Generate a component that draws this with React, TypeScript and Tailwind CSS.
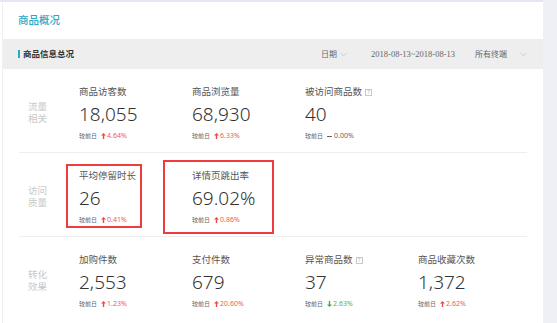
import React from "react";

type Trend = "up" | "down" | "flat";
type Metric = { label: string; value: string; trend: Trend; pct: string; q?: boolean };

const rows: { tag: [string, string]; items: Metric[] }[] = [
  {
    tag: ["流量", "相关"],
    items: [
      { label: "商品访客数", value: "18,055", trend: "up", pct: "4.64%" },
      { label: "商品浏览量", value: "68,930", trend: "up", pct: "6.33%" },
      { label: "被访问商品数", value: "40", trend: "flat", pct: "0.00%", q: true },
    ],
  },
  {
    tag: ["访问", "质量"],
    items: [
      { label: "平均停留时长", value: "26", trend: "up", pct: "0.41%" },
      { label: "详情页跳出率", value: "69.02%", trend: "up", pct: "0.86%" },
    ],
  },
  {
    tag: ["转化", "效果"],
    items: [
      { label: "加购件数", value: "2,553", trend: "up", pct: "1.23%" },
      { label: "支付件数", value: "679", trend: "up", pct: "20.60%" },
      { label: "异常商品数", value: "37", trend: "down", pct: "2.63%", q: true },
      { label: "商品收藏次数", value: "1,372", trend: "up", pct: "2.62%" },
    ],
  },
];

function Chevron() {
  return (
    <svg width="7" height="5" viewBox="0 0 7 5" className="ml-[3px]">
      <path d="M0.5 1 L3.5 4 L6.5 1" fill="none" stroke="#c4c4c4" strokeWidth="0.8" />
    </svg>
  );
}

function QIcon() {
  return (
    <span className="ml-[3px] inline-flex h-[7px] w-[7px] items-center justify-center border border-[#c8c8c8] text-[5px] leading-none text-[#aaa]">
      ?
    </span>
  );
}

function Arrow({ trend }: { trend: Trend }) {
  if (trend === "flat")
    return <span className="mr-[2px] inline-block h-[1px] w-[5px] bg-[#666]" />;
  const color = trend === "up" ? "#f04848" : "#3bb33b";
  return (
    <svg width="5" height="6" viewBox="0 0 5 6" className="mr-[1px]">
      {trend === "up" ? (
        <path d="M2.5 0 L5 2.6 L3.2 2.6 L3.2 6 L1.8 6 L1.8 2.6 L0 2.6 Z" fill={color} />
      ) : (
        <path d="M2.5 6 L5 3.4 L3.2 3.4 L3.2 0 L1.8 0 L1.8 3.4 L0 3.4 Z" fill={color} />
      )}
    </svg>
  );
}

function Cell({ m }: { m: Metric }) {
  const pctColor = m.trend === "up" ? "text-[#f05a5a]" : m.trend === "down" ? "text-[#52b84a]" : "text-[#666]";
  return (
    <div className="flex w-[113px] flex-col">
      <div className="flex h-[12px] items-center text-[9.5px] leading-[12px] text-[#555]">
        {m.label}
        {m.q && <QIcon />}
      </div>
      <div className="mt-[4px] h-[24px] text-[19px] font-light leading-[24px] text-[#333]">{m.value}</div>
      <div className="mt-[5px] flex h-[10px] items-center text-[6px] leading-[10px] text-[#666]">
        <span>较前日</span>
        <span className={`ml-[4px] flex items-center text-[7px] ${pctColor}`}>
          <Arrow trend={m.trend} />
          {m.pct}
        </span>
      </div>
    </div>
  );
}

export default function App() {
  return (
    <div className="flex h-[323px] w-[557px] overflow-hidden bg-white font-['Noto_Sans','Noto_Sans_CJK_SC',sans-serif]">
      <div className="w-[2px] border-t-2 border-[#e6e6f2]" />
      <div className="relative flex w-[541px] flex-col border-t-2 border-l border-[#e6e6f2] border-l-[#f0f0f0]">
        <div className="flex h-[37px] items-center pl-[15px] pt-[1px] text-[10.5px] font-medium text-[#2aa9c6]">
          商品概况
        </div>
        <div className="flex h-[30px] items-center bg-[#eeeeee] pl-[15px] pr-[16px]">
          <span className="h-[8px] w-[2px] bg-[#2aa9c6]" />
          <span className="ml-[3px] text-[8.5px] font-bold text-[#333]">商品信息总况</span>
          <div className="ml-auto flex items-center text-[8px] text-[#666]">
            <span className="flex items-center">
              日期
              <Chevron />
            </span>
            <span className="ml-[24px] font-['Liberation_Serif',serif] text-[8.5px]">2018-08-13~2018-08-13</span>
            <span className="ml-[20px] flex items-center">
              所有终端
              <span className="ml-[10px] flex">
                <Chevron />
              </span>
            </span>
          </div>
        </div>
        {rows.map((r, i) => (
          <React.Fragment key={i}>
            {i > 0 && <div className="ml-[16px] mr-[16px] h-px bg-[#eeeeee]" />}
            <div className="flex h-[83px] pl-[25px] pt-[17px]">
              <div className="flex w-[51px] flex-col pt-[15px] text-[9.5px] leading-[12px] text-[#c8c8c8]">
                <span>{r.tag[0]}</span>
                <span>{r.tag[1]}</span>
              </div>
              {r.items.map((m, j) => (
                <Cell key={j} m={m} />
              ))}
            </div>
          </React.Fragment>
        ))}
        <div className="pointer-events-none absolute left-[63px] top-[162px] h-[64px] w-[76px] border-2 border-[#ee3b3b]" />
        <div className="pointer-events-none absolute left-[160px] top-[158px] h-[74px] w-[111px] border-2 border-[#ee3b3b]" />
      </div>
      <div className="flex-1 bg-[#eef0f6]" />
    </div>
  );
}
